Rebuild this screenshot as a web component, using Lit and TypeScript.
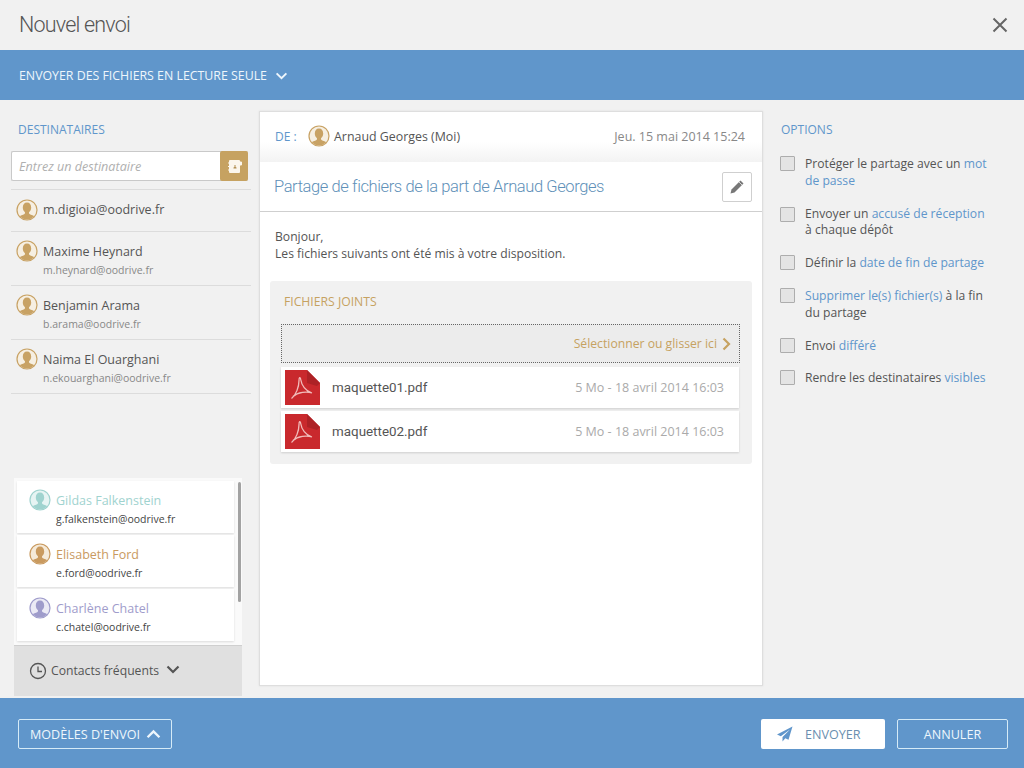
import { LitElement, html, css } from "lit";
import { customElement } from "lit/decorators.js";

const avatar = (ring: string, fill: string, bg: string) => html`<svg class="avatar" viewBox="0 0 22 22" aria-hidden="true">
  <circle cx="11" cy="11" r="10" fill="${bg}" stroke="${ring}" stroke-width="1.2"></circle>
  <clipPath id="c"><circle cx="11" cy="11" r="9.4"></circle></clipPath>
  <path clip-path="url(#c)" fill="${fill}" d="M11 3.6c2.7 0 4.2 2.1 4.2 4.8 0 2-.9 3.8-2 4.7-.3.3-.3 1.4.3 1.8 1.700 1 4.500 1.500 5.500 3.100V22H3v-4c1-1.600 3.800-2.100 5.500-3.100.6-.4.600-1.500.3-1.800-1.100-.9-2-2.700-2-4.700 0-2.700 1.500-4.800 4.200-4.800z"></path>
</svg>`;
const gold = () => avatar("#c8a264", "#c8a264", "#f6efe2");

const chevron = (cls: string, d: string) => html`<svg class="${cls}" viewBox="0 0 14 9" aria-hidden="true"><path d="${d}" fill="none" stroke="currentColor" stroke-width="2.200"></path></svg>`;
const DOWN = "M1.500 1.500 7 7l5.500-5.500";
const UP = "M1.500 7.500 7 2l5.500 5.500";

const pdf = () => html`<svg class="pdf" viewBox="0 0 35 35" aria-hidden="true">
  <path d="M0 0h22l13 13v22H0z" fill="#c9292d"></path>
  <path d="M22 0l13 13-3 3-10-3V3z" fill="#ad2226"></path>
  <path d="M6.500 28.500C11 25 14 17 14 10.500c0-3.500 1.300-3.800 1.700-1C16.500 15 20.500 21 27 23c-5-1.600-14-1.200-19 3.500" fill="none" stroke="#f1bcba" stroke-width="1.300"></path>
</svg>`;

@customElement("app-root")
export class AppRoot extends LitElement {
  static styles = css`
    :host { display: block; width: 1024px; height: 768px; overflow: hidden; background: #f1f1f1; color: #555; font-family: "Open Sans", "Noto Sans", sans-serif; font-size: 12.150px; }
    * { box-sizing: border-box; }
    .page { height: 768px; display: flex; flex-direction: column; }
    .top { height: 50px; flex: none; display: flex; align-items: center; justify-content: space-between; padding: 0 16px 0 19px; }
    .top h1 { margin: 0; font: 300 21.500px/1 Roboto, sans-serif; letter-spacing: -.8px; color: #555; }
    .close { width: 16px; height: 16px; display: block; color: #666; }
    .band { height: 50px; flex: none; background: #6096cb; color: #eef6fc; display: flex; align-items: center; padding: 1px 0 0 19px; gap: 8px; font-size: 12.350px; }
    .chev { width: 13px; height: 8px; display: block; }
    .main { flex: 1; min-height: 0; display: flex; }
    .left { width: 259px; flex: none; padding: 0 11px 2px 11px; display: flex; flex-direction: column; }
    .heading { font-size: 12px; color: #6096cb; line-height: 16px; }
    .left .heading { margin: 22px 0 0 7px; }
    .search { margin-top: 13px; width: 237px; height: 30px; display: flex; background: #fff; border: 1px solid #c9c9c9; border-right: 0; border-radius: 2px; }
    .search span { flex: 1; padding: 1px 0 0 7px; font-style: italic; color: #b0b0b0; line-height: 28px; font-size: 12.600px; }
    .book { width: 28px; height: 30px; margin-top: -1px; background: #c6a261; border-radius: 2px; display: flex; align-items: center; justify-content: center; }
    .book svg { width: 15px; height: 15px; }
    .recipients { margin-top: 8px; border-top: 1px solid #dcdcdc; width: 240px; }
    .rec { display: flex; gap: 5px; padding: 8px 0 0 5px; border-bottom: 1px solid #dcdcdc; height: 54px; }
    .rec.one { height: 42px; padding-top: 9px; }
    .avatar { width: 22px; height: 22px; flex: none; display: block; }
    .rec b, .fav b { display: block; font-weight: 400; font-size: 12.500px; line-height: 17px; color: #555; }
    .rec.one b { line-height: 22px; margin-top: 0; }
    .rec b { margin-top: 3px; }
    .rec small { display: block; font-size: 10.500px; line-height: 14px; margin-top: 3px; color: #888; }
    .fav-box { margin: auto 0 0 3px; width: 228px; height: 218px; background: #fff; display: flex; flex-direction: column; position: relative; flex: none; }
    .fav-list { flex: 1; padding: 3px 0 0 3px; display: flex; flex-direction: column; gap: 2px; background: #fafafa; }
    .fav { width: 217px; height: 52px; background: #fff; box-shadow: 0 1px 2px rgba(0,0,0,.12); display: flex; gap: 5px; padding: 8px 0 0 12px; }
    .fav b { font-size: 12.500px; line-height: 17px; margin-top: 3px; }
    .fav small { display: block; font-size: 10.500px; line-height: 14px; margin-top: 3px; color: #444; }
    .scroll { position: absolute; left: 224px; top: 4px; width: 3px; height: 120px; background: #a2a2a2; border-radius: 2px; }
    .fav-foot { height: 51px; flex: none; background: #e0e0e0; border-top: 1px solid #cfcfcf; display: flex; align-items: center; padding: 0 0 1px 15px; color: #555; font-size: 12.200px; }
    .clock { width: 18px; height: 18px; margin-right: 4px; }
    .fav-foot .chev { margin-left: 7px; margin-top: -3px; width: 14px; height: 9px; color: #555; }
    .center { width: 504px; flex: none; margin: 11px 0 12px; background: #fff; border: 1px solid #dedede; box-shadow: 0 0 2px rgba(0,0,0,.08); display: flex; flex-direction: column; }
    .from { height: 50px; flex: none; background: linear-gradient(#fff 60%, #f3f3f3); display: flex; align-items: center; padding: 0 17px 2px 15px; font-size: 12.400px; }
    .from .de { color: #6096cb; font-size: 12px; width: 33px; }
    .from .name { margin-left: 4px; color: #555; }
    .from .date { margin-left: auto; color: #888; font-size: 12.500px; }
    .subject { height: 50px; flex: none; border-bottom: 1px solid #cfcfcf; display: flex; align-items: center; justify-content: space-between; padding: 0 10px 0 14px; }
    .subject span { font-size: 16.500px; letter-spacing: -.4px; color: #6090b8; font-family: Roboto, sans-serif; font-weight: 300; }
    .edit { width: 30px; height: 30px; border: 1px solid #cfcfcf; border-radius: 2px; display: flex; align-items: center; justify-content: center; background: #fff; }
    .edit svg { width: 16px; height: 16px; }
    .msg { padding: 16px 15px 0; line-height: 17px; font-size: 12.150px; color: #555; }
    .files { margin: 19px 10px 0; height: 183px; background: #f1f1f1; border-radius: 3px; padding: 0 11px; display: flex; flex-direction: column; }
    .files h2 { margin: 13px 0 0 3px; font-weight: 400; font-size: 12.200px; line-height: 16px; color: #c6a261; }
    .drop { margin-top: 14px; width: 459px; height: 39px; flex: none; border: 1px dotted #666; background: #ececec; display: flex; align-items: center; justify-content: flex-end; gap: 5px; padding-right: 8px; color: #c6a261; font-size: 12.200px; }
    .drop svg { width: 9px; height: 14px; display: block; }
    .file { margin-top: 4px; width: 458px; height: 41px; flex: none; background: #fff; box-shadow: 0 1px 2px rgba(0,0,0,.15); display: flex; align-items: center; padding: 0 15px 0 4px; }
    .file + .file { margin-top: 3px; }
    .pdf { width: 35px; height: 35px; flex: none; display: block; }
    .file .n { margin-left: 12px; font-size: 13.400px; font-family: Roboto, sans-serif; color: #555; }
    .file .m { margin-left: auto; color: #aaa; font-size: 12.500px; }
    .right { flex: 1; padding: 22px 30px 0 18px; }
    .opts { margin-top: 17px; display: flex; flex-direction: column; gap: 16px; }
    .opt { display: flex; gap: 10px; line-height: 17px; font-size: 12.150px; color: #555; }
    .opt.first { margin-bottom: 1px; }
    .opt.last { margin-top: -1px; }
    .opt.tight { line-height: 16px; }
    .box { width: 15px; height: 15px; margin: 1px 0 0 -1px; flex: none; border: 1px solid #adadad; background: #e4e4e4; border-radius: 1px; }
    a { color: #6096cb; text-decoration: none; }
    .foot { height: 70px; flex: none; background: #6096cb; display: flex; align-items: center; padding: 2px 16px 0 18px; }
    .btn { height: 30px; border-radius: 2px; display: flex; align-items: center; justify-content: center; font-size: 12.600px; }
    .ghost { border: 1px solid #d6ebf7; color: #eef6fc; }
    .models { width: 154px; gap: 6px; padding-left: 1px; }
    .models .chev { width: 15px; height: 10px; }
    .send { margin-left: auto; width: 124px; background: #fff; color: #6a8fb0; gap: 12px; justify-content: flex-start; padding-left: 16px; }
    .send svg { width: 16px; height: 16px; }
    .cancel { margin-left: 12px; width: 111px; }
  `;

  render() {
    const recs = [["Maxime Heynard", "m.heynard@oodrive.fr"], ["Benjamin Arama", "b.arama@oodrive.fr"], ["Naima El Ouarghani", "n.ekouarghani@oodrive.fr"]];
    const favs = [
      ["Gildas Falkenstein", "g.falkenstein@oodrive.fr", "#9fd3cf", "#9fd3cf", "#e6f4f3"],
      ["Elisabeth Ford", "e.ford@oodrive.fr", "#c99a5f", "#c99a5f", "#f5ead9"],
      ["Charlène Chatel", "c.chatel@oodrive.fr", "#9f9ccb", "#9f9ccb", "#ebeaf5"],
    ];
    return html`<div class="page">
      <header class="top"><h1>Nouvel envoi</h1>
        <svg class="close" viewBox="0 0 16 16" aria-label="Fermer"><path d="M1.500 1.500l13 13M14.500 1.500l-13 13" stroke="currentColor" stroke-width="2" fill="none"></path></svg>
      </header>
      <div class="band"><span>ENVOYER DES FICHIERS EN LECTURE SEULE</span>${chevron("chev", DOWN)}</div>
      <div class="main">
        <section class="left">
          <div class="heading">DESTINATAIRES</div>
          <div class="search"><span>Entrez un destinataire</span>
            <div class="book"><svg viewBox="0 0 15 15" aria-hidden="true"><rect x="2" y="1" width="11" height="13" rx="1" fill="#fbf6ec"></rect><path d="M1 4h2M1 7.500h2M1 11h2M13 3h1.500v3H13z" stroke="#fbf6ec" fill="#fbf6ec"></path><path d="M6.500 9.500h3V8.400l-1-.4V6h-1v2l-1 .4z" fill="#b08c4e"></path></svg></div>
          </div>
          <div class="recipients">
            <div class="rec one">${gold()}<div><b>m.digioia@oodrive.fr</b></div></div>
            ${recs.map(r => html`<div class="rec">${gold()}<div><b>${r[0]}</b><small>${r[1]}</small></div></div>`)}
          </div>
          <div class="fav-box">
            <div class="fav-list">
              ${favs.map(f => html`<div class="fav">${avatar(f[2], f[3], f[4])}<div><b style="color:${f[2]}">${f[0]}</b><small>${f[1]}</small></div></div>`)}
            </div>
            <div class="scroll"></div>
            <div class="fav-foot">
              <svg class="clock" viewBox="0 0 18 18" aria-hidden="true"><circle cx="9" cy="9" r="7.500" fill="none" stroke="#555" stroke-width="1.300"></circle><path d="M9 4.500V9.500H13" fill="none" stroke="#555" stroke-width="1.300"></path></svg>
              <span>Contacts fréquents</span>${chevron("chev", DOWN)}
            </div>
          </div>
        </section>
        <section class="center">
          <div class="from"><span class="de">DE :</span>${gold()}<span class="name">Arnaud Georges (Moi)</span><span class="date">Jeu. 15 mai 2014 15:24</span></div>
          <div class="subject"><span>Partage de fichiers de la part de Arnaud Georges</span>
            <div class="edit"><svg viewBox="0 0 16 16" aria-hidden="true"><path d="M11.500 1.500l3 3-9 9-4 1 1-4z" fill="#777"></path><path d="M10 3l3 3" stroke="#fff" stroke-width=".7"></path></svg></div>
          </div>
          <div class="msg">Bonjour,<br>Les fichiers suivants ont été mis à votre disposition.</div>
          <div class="files">
            <h2>FICHIERS JOINTS</h2>
            <div class="drop"><span>Sélectionner ou glisser ici</span><svg viewBox="0 0 9 14" aria-hidden="true"><path d="M1.500 1.500 7 7l-5.500 5.500" fill="none" stroke="#c6a261" stroke-width="2.200"></path></svg></div>
            <div class="file">${pdf()}<span class="n">maquette01.pdf</span><span class="m">5 Mo - 18 avril 2014 16:03</span></div>
            <div class="file">${pdf()}<span class="n">maquette02.pdf</span><span class="m">5 Mo - 18 avril 2014 16:03</span></div>
          </div>
        </section>
        <section class="right">
          <div class="heading">OPTIONS</div>
          <div class="opts">
            <div class="opt first"><div class="box"></div><div>Protéger le partage avec un <a>mot de passe</a></div></div>
            <div class="opt tight"><div class="box"></div><div>Envoyer un <a>accusé de réception</a> à chaque dépôt</div></div>
            <div class="opt"><div class="box"></div><div>Définir la <a>date de fin de partage</a></div></div>
            <div class="opt"><div class="box"></div><div><a>Supprimer le(s) fichier(s)</a> à la fin du partage</div></div>
            <div class="opt"><div class="box"></div><div>Envoi <a>différé</a></div></div>
            <div class="opt last"><div class="box"></div><div>Rendre les destinataires <a>visibles</a></div></div>
          </div>
        </section>
      </div>
      <footer class="foot">
        <div class="btn ghost models"><span>MODÈLES D'ENVOI</span>${chevron("chev", UP)}</div>
        <div class="btn send"><svg viewBox="0 0 16 16" aria-hidden="true"><path d="M15.500.500 0 8.500l3.800 1.800L13 3.500 5.500 11v4.500l2.800-3.200 3.200 1.500z" fill="#6096cb"></path></svg><span>ENVOYER</span></div>
        <div class="btn ghost cancel">ANNULER</div>
      </footer>
    </div>`;
  }
}
